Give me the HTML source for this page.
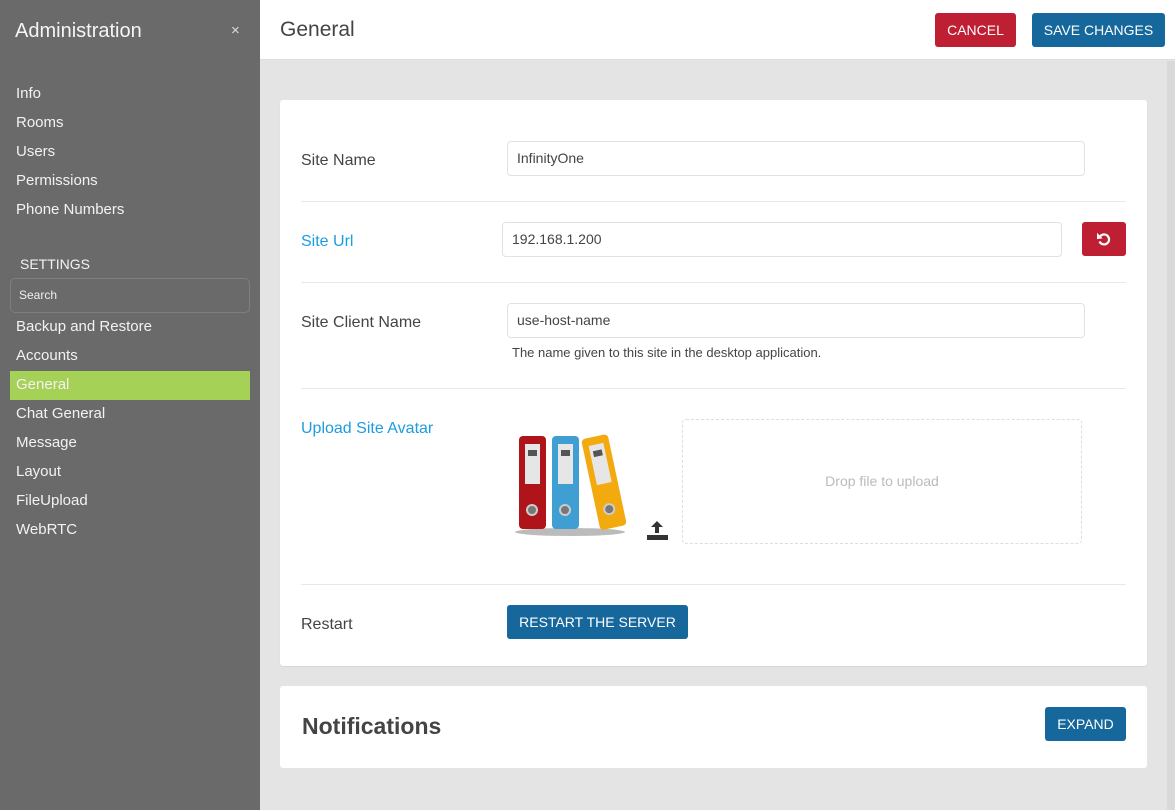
<!DOCTYPE html>
<html><head><meta charset="utf-8"><style>
*{box-sizing:border-box;margin:0;padding:0}
body{width:1175px;height:810px;overflow:hidden;font-family:"Liberation Sans",Arial,sans-serif;background:#e4e4e4;position:relative;color:#444}
.a{position:absolute}
#side{left:0;top:0;width:260px;height:810px;background:#6a6a6a;color:#f2f2f2}
.nav{position:absolute;left:16px;font-size:15px;color:#f2f2f2}
.btn{position:absolute;color:#fff;font-size:14px;border-radius:3px;text-align:center;line-height:34px;height:34px}
.inp{position:absolute;border:1px solid #e2e2e2;border-radius:4px;height:35px;font-size:14px;line-height:33px;padding-left:9px;color:#444;background:#fff}
.lbl{position:absolute;left:301px;font-size:16px;color:#444}
.hr{position:absolute;left:301px;width:825px;height:1px;background:#e8e8e8}
</style></head><body>
<div id="side" class="a">
 <div class="a" style="left:15px;top:20px;font-size:20px;color:#f5f5f5">Administration</div>
 <div class="a" style="left:231px;top:22px;font-size:15px;color:#ddd">×</div>
 <div class="nav" style="top:85px">Info</div>
 <div class="nav" style="top:114px">Rooms</div>
 <div class="nav" style="top:143px">Users</div>
 <div class="nav" style="top:172px">Permissions</div>
 <div class="nav" style="top:201px">Phone Numbers</div>
 <div class="nav" style="left:20px;top:256px;font-size:14px">SETTINGS</div>
 <div class="a" style="left:10px;top:278px;width:240px;height:35px;border:1px solid #7e7e7e;border-radius:5px;font-size:12px;line-height:33px;padding-left:8px;color:#eee">Search</div>
 <div class="nav" style="top:318px">Backup and Restore</div>
 <div class="nav" style="top:347px">Accounts</div>
 <div class="a" style="left:10px;top:371px;width:240px;height:29px;background:#a6d157"></div>
 <div class="nav" style="top:376px">General</div>
 <div class="nav" style="top:405px">Chat General</div>
 <div class="nav" style="top:434px">Message</div>
 <div class="nav" style="top:463px">Layout</div>
 <div class="nav" style="top:492px">FileUpload</div>
 <div class="nav" style="top:521px">WebRTC</div>
</div>
<div class="a" style="left:260px;top:0;width:915px;height:60px;background:#fff;border-bottom:1px solid #ddd"></div>
<div class="a" style="left:280px;top:18px;font-size:21px;color:#444">General</div>
<div class="btn" style="left:935px;top:13px;width:81px;background:#be1f32">CANCEL</div>
<div class="btn" style="left:1032px;top:13px;width:133px;background:#15679c">SAVE CHANGES</div>
<div class="a" style="left:1167px;top:61px;width:8px;height:749px;background:#d9d9d9"></div>

<div class="a" style="left:280px;top:100px;width:867px;height:566px;background:#fff;border-radius:3px;box-shadow:0 1px 1px rgba(0,0,0,.06)"></div>
<div class="lbl" style="top:152px">Site Name</div>
<div class="inp" style="left:507px;top:141px;width:578px">InfinityOne</div>
<div class="hr" style="top:201px"></div>
<div class="lbl" style="top:233px;color:#1d9ce0">Site Url</div>
<div class="inp" style="left:502px;top:222px;width:560px">192.168.1.200</div>
<div class="a" style="left:1082px;top:222px;width:44px;height:34px;background:#be1f32;border-radius:3px">
 <svg width="44" height="34" viewBox="0 0 44 34"><path d="M18 14.5 A5 5 0 1 1 17.5 19.5" fill="none" stroke="#fff" stroke-width="2.2"/><path d="M15.5 12 L19.5 16 L15.5 16.5Z" fill="#fff" stroke="#fff" stroke-width="1"/></svg>
</div>
<div class="hr" style="top:282px"></div>
<div class="lbl" style="top:314px">Site Client Name</div>
<div class="inp" style="left:507px;top:303px;width:578px">use-host-name</div>
<div class="a" style="left:512px;top:345px;font-size:13px;color:#444">The name given to this site in the desktop application.</div>
<div class="hr" style="top:388px"></div>
<div class="lbl" style="top:420px;color:#1d9ce0">Upload Site Avatar</div>
<svg class="a" style="left:510px;top:430px" width="160" height="115" viewBox="0 0 160 115">
 <ellipse cx="60" cy="102" rx="55" ry="4" fill="#bbb"/>
 <rect x="9" y="6" width="27" height="93" rx="4" fill="#b0141b"/>
 <rect x="15" y="14" width="15" height="40" fill="#e6e6e6"/><rect x="18" y="20" width="9" height="6" fill="#555"/>
 <circle cx="22" cy="80" r="6" fill="#ccc"/><circle cx="22" cy="80" r="4" fill="#777"/>
 <rect x="42" y="6" width="27" height="93" rx="4" fill="#3f9fd3"/>
 <rect x="48" y="14" width="15" height="40" fill="#e6e6e6"/><rect x="51" y="20" width="9" height="6" fill="#555"/>
 <circle cx="55" cy="80" r="6" fill="#ccc"/><circle cx="55" cy="80" r="4" fill="#777"/>
 <g transform="rotate(-12 92 50)"><rect x="80" y="6" width="27" height="93" rx="4" fill="#f3aa0f"/>
 <rect x="86" y="14" width="15" height="40" fill="#e6e6e6"/><rect x="89" y="20" width="9" height="6" fill="#555"/>
 <circle cx="93" cy="80" r="6" fill="#ccc"/><circle cx="93" cy="80" r="4" fill="#777"/></g>
 <path d="M147 91 L141 97 H145 V103 H149 V97 H153Z" fill="#333"/><rect x="137" y="105" width="21" height="5" fill="#333"/>
</svg>
<div class="a" style="left:682px;top:419px;width:400px;height:125px;border:1px dashed #ddd;border-radius:4px;text-align:center;line-height:123px;font-size:14px;color:#bbb">Drop file to upload</div>
<div class="hr" style="top:584px"></div>
<div class="lbl" style="top:616px">Restart</div>
<div class="btn" style="left:507px;top:605px;width:181px;background:#15679c">RESTART THE SERVER</div>

<div class="a" style="left:280px;top:686px;width:867px;height:82px;background:#fff;border-radius:3px"></div>
<div class="a" style="left:302px;top:713px;font-size:23px;font-weight:bold;color:#444">Notifications</div>
<div class="btn" style="left:1045px;top:707px;width:81px;background:#15679c">EXPAND</div>
</body></html>
